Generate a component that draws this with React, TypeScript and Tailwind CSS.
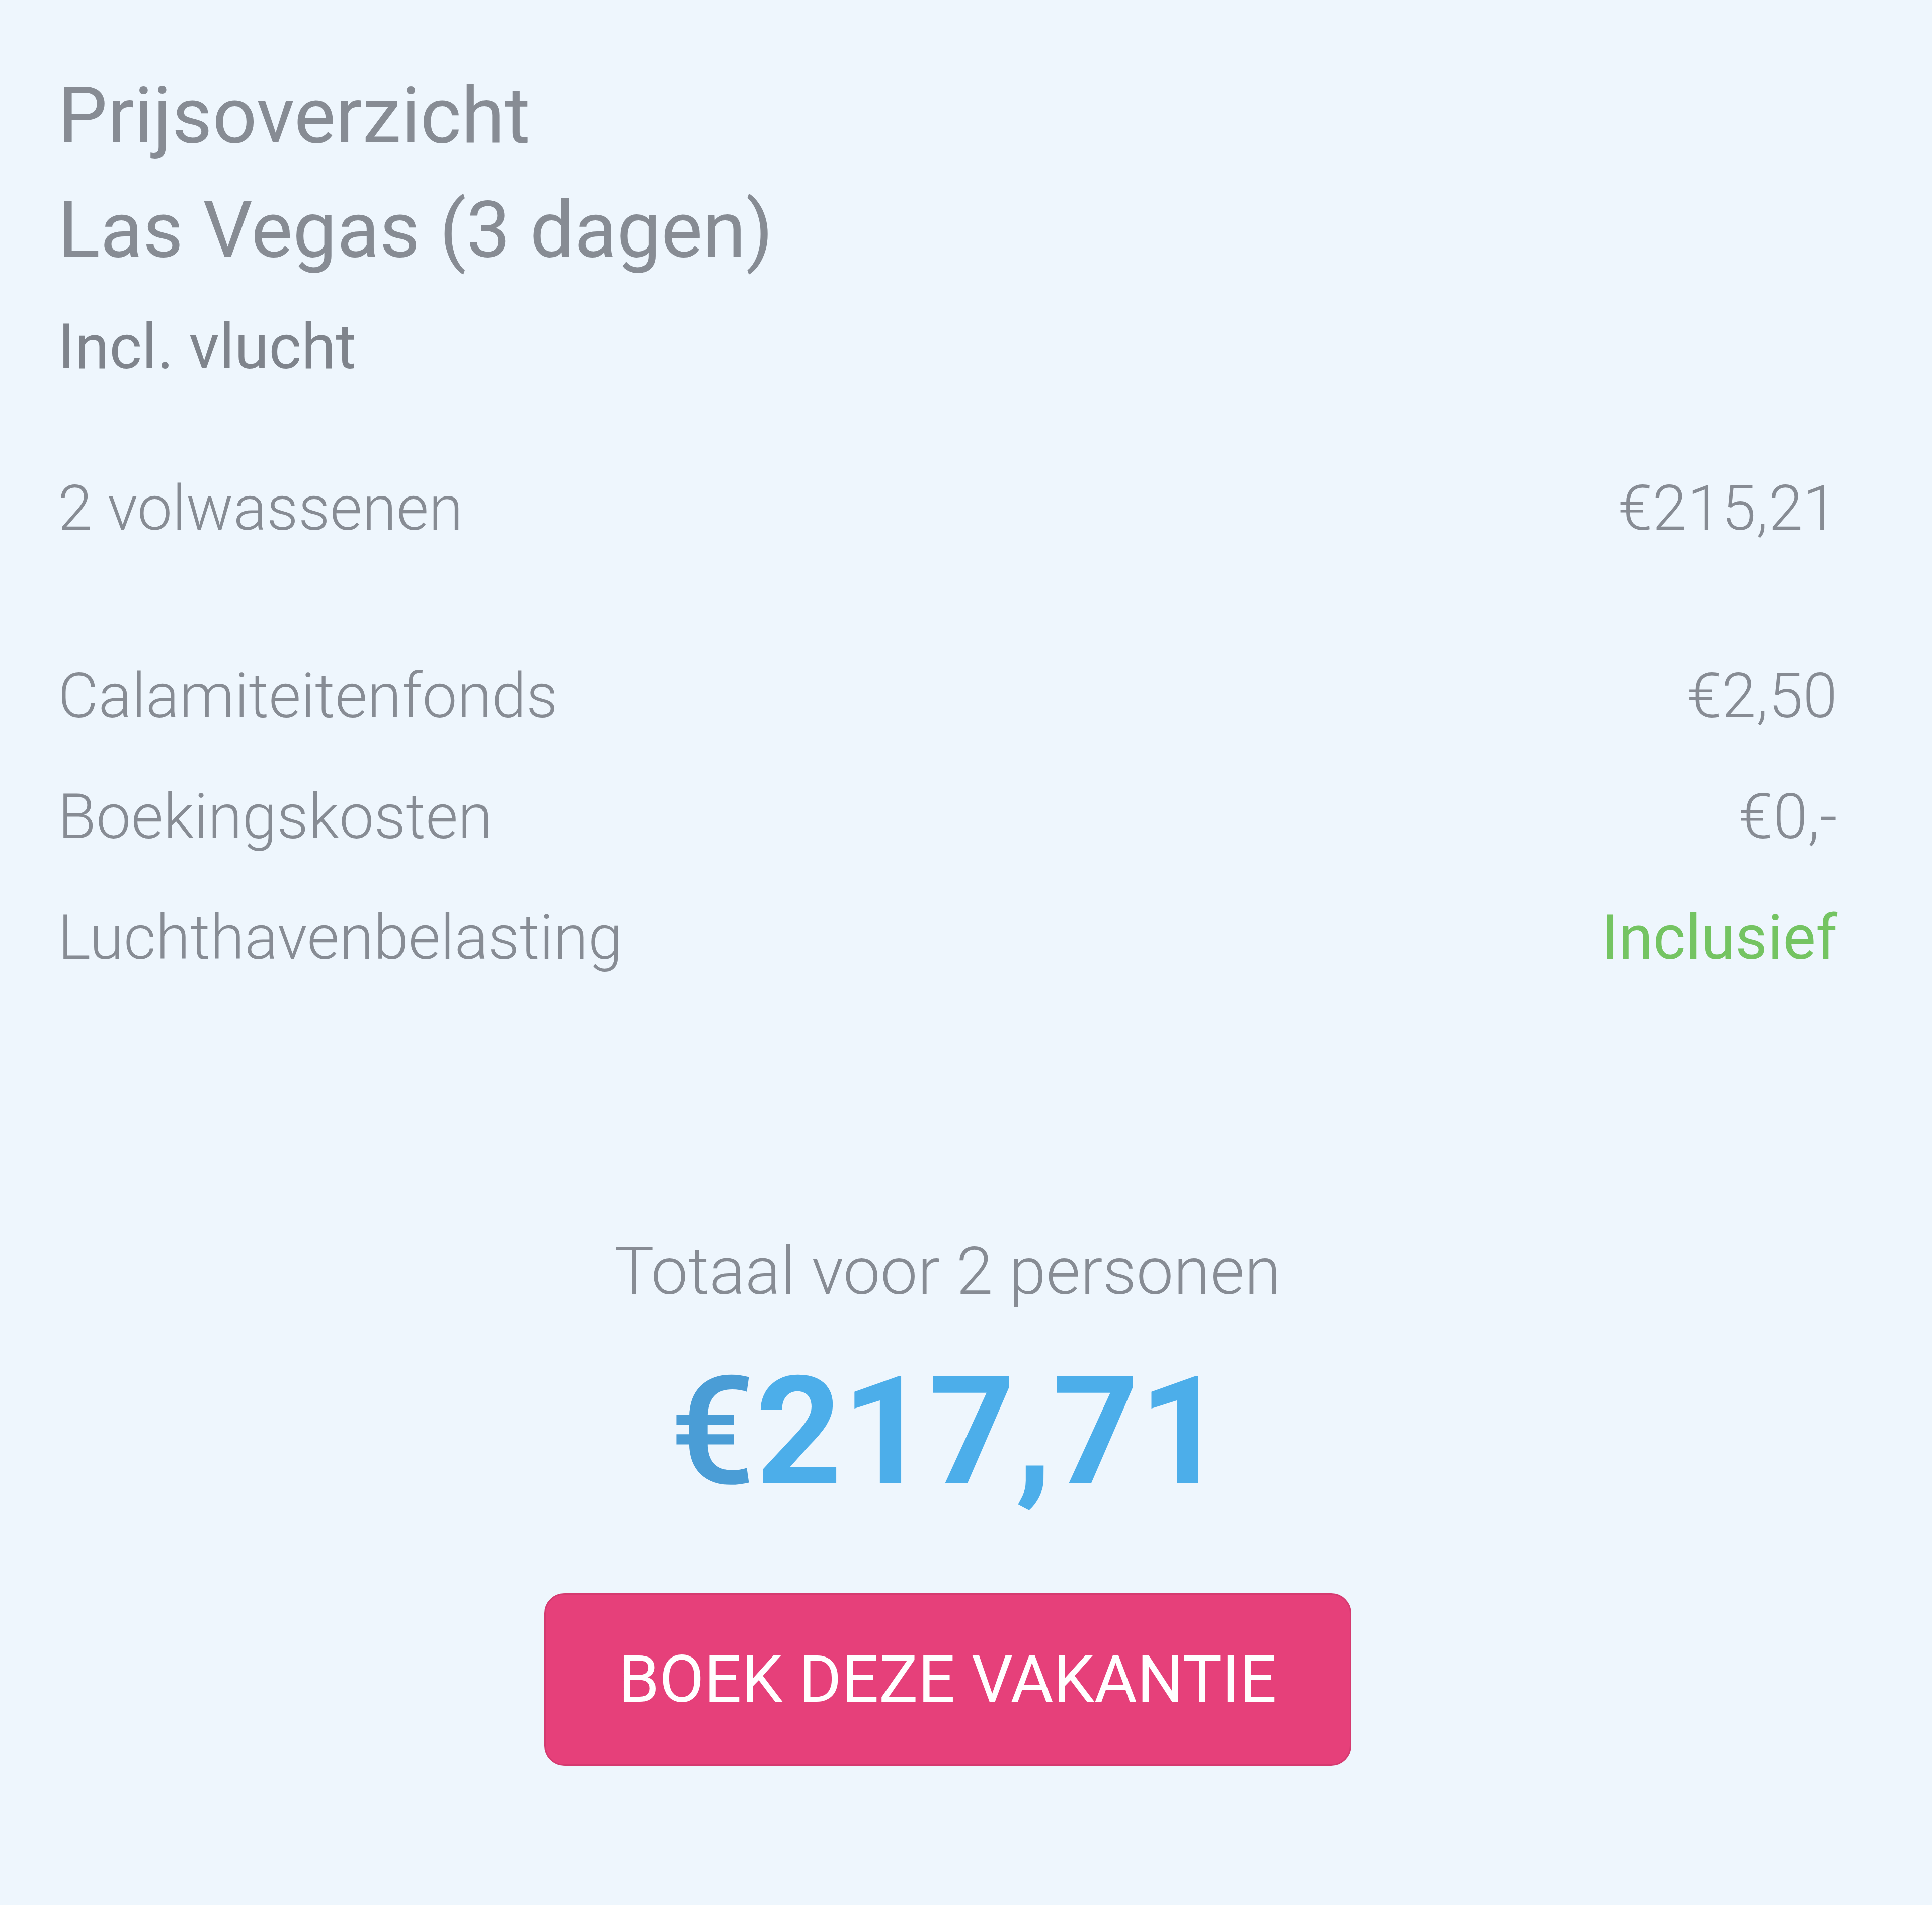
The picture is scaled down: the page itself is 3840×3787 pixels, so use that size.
const rows = [
  { label: 'Calamiteitenfonds', value: '€2,50' },
  { label: 'Boekingskosten', value: '€0,-' },
  { label: 'Luchthavenbelasting', value: 'Inclusief', green: true },
]

function Row({ label, value, green }: { label: string; value: string; green?: boolean }) {
  return (
    <div className="flex justify-between text-[124px] leading-[240px] font-light">
      <span>{label}</span>
      <span className={green ? 'text-[#74c462] font-normal' : ''}>{value}</span>
    </div>
  )
}

export default function App() {
  return (
    <div
      className="w-[3840px] h-[3787px] bg-[#eef6fd] text-[#878c94] pl-[115px] pr-[188px] pt-[116px]"
      style={{ fontFamily: 'Roboto, "Liberation Sans", sans-serif' }}
    >
      <div className="text-[156px] leading-[227px]">
        <div>Prijsoverzicht</div>
        <div>Las Vegas (3 dagen)</div>
      </div>
      <div className="mt-[45px] text-[124px] leading-[150px] text-[#7f848c]">Incl. vlucht</div>

      <div className="mt-[126px]">
        <Row label="2 volwassenen" value="€215,21" />
      </div>
      <div className="mt-[133px]">
        {rows.map((r) => (
          <Row key={r.label} {...r} />
        ))}
      </div>

      <div className="flex flex-col items-center">
        <div className="mt-[463px] text-[132px] leading-[160px] font-light">Totaal voor 2 personen</div>
        <div className="mt-[90px] text-[300px] leading-[300px] font-bold text-[#4caeea]">
          <span className="font-medium text-[#4a9dd6]">€</span>217,71
        </div>
        <button
          type="button"
          className="mt-[170px] w-[1604px] h-[343px] rounded-[40px] bg-[#e6407a] border-[3px] border-[#d53a70] text-white text-[130px]"
        >
          BOEK DEZE VAKANTIE
        </button>
      </div>
    </div>
  )
}
